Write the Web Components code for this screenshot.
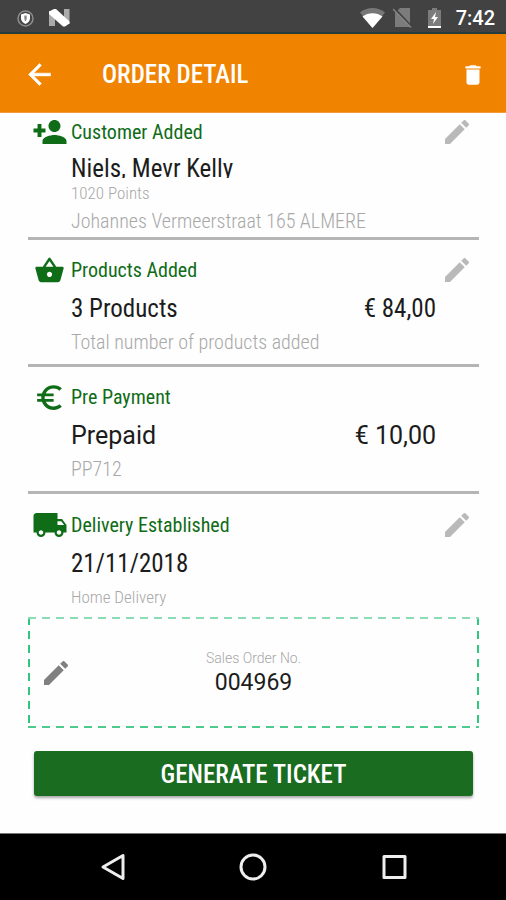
<!DOCTYPE html>
<html lang="en">
<head>
<meta charset="utf-8">
<meta name="viewport" content="width=device-width, initial-scale=1">
<title>Order Detail</title>
<style>
  html, body { margin: 0; padding: 0; }
  body {
    min-height: 100vh;
    display: flex;
    flex-direction: column;
    background: #fefefe;
    color: #1c1c1c;
    font-family: "Roboto Condensed", Roboto, "Liberation Sans", sans-serif;
  }
  main { flex: 1; display: flex; flex-direction: column; padding: 0 27px 0 28px; }
</style>
</head>
<body>
<status-bar>7:42</status-bar>
<app-bar>ORDER DETAIL</app-bar>
<main>
  <order-section icon="person" edit="Edit customer" compact>
    <span slot="heading">Customer Added</span>
    <span slot="value">Niels, Mevr Kelly</span>
    <span slot="detail">1020 Points</span>
    <span slot="note">Johannes Vermeerstraat 165 ALMERE</span>
  </order-section>
  <order-section icon="basket" edit="Edit products">
    <span slot="heading">Products Added</span>
    <span slot="value">3 Products</span>
    <span slot="amount">€ 84,00</span>
    <span slot="note">Total number of products added</span>
  </order-section>
  <order-section icon="euro" wide>
    <span slot="heading">Pre Payment</span>
    <span slot="value">Prepaid</span>
    <span slot="amount">€ 10,00</span>
    <span slot="note">PP712</span>
  </order-section>
  <order-section icon="truck" edit="Edit delivery" last>
    <span slot="heading">Delivery Established</span>
    <span slot="value">21/11/2018</span>
    <span slot="note">Home Delivery</span>
  </order-section>
  <sales-order>
    <span slot="label">Sales Order No.</span>
    <span slot="number">004969</span>
  </sales-order>
  <primary-button>GENERATE TICKET</primary-button>
</main>
<nav-bar></nav-bar>

<script>
const ICONS = {
  person: [36, '<path d="M15 12c2.21 0 4-1.79 4-4s-1.79-4-4-4-4 1.79-4 4 1.79 4 4 4zm-8.700-2.300V6.700H3.700V9.700H1v2.600h2.700v3h2.600v-3H9V9.700H6.300zM15 14c-2.67 0-8 1.34-8 4v2h16v-2c0-2.66-5.33-4-8-4z"/>'],
  basket: [31, '<path d="M17.21 9l-4.38-6.56c-.19-.28-.51-.42-.83-.42-.32 0-.64.14-.83.43L6.79 9H2c-.55 0-1 .45-1 1 0 .09.01.18.04.27l2.54 9.27c.23.84 1 1.46 1.92 1.46h13c.92 0 1.69-.62 1.93-1.46l2.54-9.27L23 10c0-.55-.45-1-1-1h-4.79zM9 9l3-4.4L15 9H9zm3 8c-1.1 0-2-.9-2-2s.9-2 2-2 2 .9 2 2-.9 2-2 2z"/>'],
  euro: [33, '<path d="M15 18.5c-2.51 0-4.68-1.42-5.76-3.5H15v-2H8.58c-.05-.33-.08-.66-.08-1s.03-.67.08-1H15V9H9.24C10.32 6.92 12.5 5.5 15 5.5c1.61 0 3.09.59 4.23 1.57L21 5.3C19.41 3.87 17.3 3 15 3c-3.92 0-7.24 2.51-8.48 6H3v2h3.06c-.04.33-.06.66-.06 1s.02.67.06 1H3v2h3.52c1.24 3.49 4.56 6 8.48 6 2.31 0 4.41-.87 6-2.3l-1.78-1.77c-1.13.98-2.6 1.57-4.22 1.57z"/>'],
  truck: [36, '<path d="M20 8h-3V4H3c-1.1 0-2 .9-2 2v11h2c0 1.66 1.34 3 3 3s3-1.34 3-3h6c0 1.66 1.34 3 3 3s3-1.34 3-3h2v-5l-3-4zM6 18.5c-.83 0-1.5-.67-1.5-1.5s.67-1.5 1.5-1.5 1.5.67 1.5 1.5-.67 1.5-1.5 1.5zm13.5-9l1.96 2.5H17V9.5h2.5zm-1.5 9c-.83 0-1.5-.67-1.5-1.5s.67-1.5 1.5-1.5 1.5.67 1.5 1.5-.67 1.5-1.5 1.5z"/>'],
  pencil: [32, '<path d="M3 17.25V21h3.75L17.81 9.94l-3.75-3.75L3 17.25zM20.71 7.04c.39-.39.39-1.02 0-1.41l-2.34-2.34c-.39-.39-1.02-.39-1.41 0l-1.83 1.83 3.75 3.75 1.83-1.83z"/>'],
  back: [33, '<path d="M20 11H7.83l5.59-5.59L12 4l-8 8 8 8 1.41-1.41L7.83 13H20v-2z" stroke="currentColor" stroke-width=".4"/>'],
  trash: [26, '<path d="M6 19c0 1.1.9 2 2 2h8c1.1 0 2-.9 2-2V7H6v12zM19 4h-3.5l-1-1h-5l-1 1H5v2h14V4z"/>']
};
const icon = name => {
  const [size, body] = ICONS[name];
  return `<svg width="${size}" height="${size}" viewBox="0 0 24 24" fill="currentColor" aria-hidden="true">${body}</svg>`;
};
const BASE = `
  :host, *, *::before, *::after { box-sizing: border-box; }
  svg { display: block; flex: none; }
  button { font: inherit; color: inherit; background: none; border: 0; margin: 0; padding: 0; cursor: pointer; display: flex; align-items: center; justify-content: center; }
`;
const define = (name, render) => customElements.define(name, class extends HTMLElement {
  constructor() { super(); this.attachShadow({ mode: "open" }); }
  connectedCallback() { this.shadowRoot.innerHTML = `<style>${BASE}</style>` + render(this); }
});

define("status-bar", () => `
  <style>
    :host { display: flex; align-items: center; height: 34px; padding: 2px 11px 0 16px; background: #424242; box-shadow: inset 0 -2px #253c3c; color: #fff; font: 500 20px/24px Roboto, sans-serif; }
    .left { display: flex; gap: 14px; flex: 1; align-items: center; }
    .right { display: flex; align-items: center; }
    .wifi { margin-right: 8px; } .sim { margin-right: 16px; } .battery { margin-right: 15px; }
  </style>
  <div class="left">
    <svg width="19" height="19" viewBox="0 0 19 19"><circle cx="9.500" cy="9.500" r="7.500" fill="#444" stroke="#8c8c8c" stroke-width="1.500"/><path d="M5 5.500l4.500-1.500 4.500 1.500v4c0 2.500-2 4.300-4.500 5.500C7 13.800 5 12 5 9.500z" fill="#fff"/><path d="M8.300 6.500h2.400v3l-.7 2.500H9l-.7-2.500z" fill="#888"/></svg>
    <svg width="21" height="18" viewBox="0 0 21 18"><path d="M0 2h6v15H0zM15 0h5.500v15H15z" fill="#aaa"/><path d="M0 2.500L5 0h2l13.500 12.500v2L16 17.500h-2L0 5z" fill="#fff"/></svg>
  </div>
  <div class="right">
    <svg class="wifi" width="25" height="20" viewBox="0 0 25 20"><path d="M0 4.500C7-1.500 18-1.500 25 4.500L12.500 20z" fill="#777"/><path d="M2.500 8.500C8 4 17 4 22.500 8.500L12.500 20z" fill="#fff"/></svg>
    <svg class="sim" width="19" height="20" viewBox="0 0 19 20"><path d="M7 0h10v19H2V5z" fill="#7c7c7c"/><path d="M2 1l18 19" stroke="#424242" stroke-width="2"/><path d="M0 1l18 18.500" stroke="#858585" stroke-width="1.500"/></svg>
    <svg class="battery" width="13" height="20" viewBox="0 0 13 20"><path d="M4 0h5v2h4v18H0V2h4z" fill="#7c7c7c"/><path d="M0 18h13v2H0z" fill="#fff"/><path d="M8 4l-5 7h3l-1 5 5-7H7z" fill="#fff"/></svg>
    <span><slot></slot></span>
  </div>`);

define("app-bar", () => `
  <style>
    :host { display: flex; align-items: center; height: 79px; padding: 3px 20px 0 23px; background: #f08300; color: #fff; border-bottom: 1px solid #f39a3c; }
    h1 { flex: 1; margin: 0 0 0 46px; font-size: 25px; line-height: 30px; font-weight: 500; }
  </style>
  <button aria-label="Back">${icon("back")}</button>
  <h1><slot></slot></h1>
  <button aria-label="Delete order">${icon("trash")}</button>`);

define("order-section", el => `
  <style>
    :host { display: block; padding: 15px 0 13px; border-bottom: 3px solid #b5b5b5; }
    :host([last]) { border-bottom: 0; padding: 16px 0 11px; }
    :host([compact]) { padding: 4px 0 7px; }
    .head { display: flex; align-items: center; height: 30px; padding-right: 6px; }
    .icon { width: 43px; display: flex; justify-content: center; align-items: center; color: #0f6c17; }
    h2 { flex: 1; margin: 0; font-size: 20px; line-height: 24px; font-weight: 400; color: #0f6c17; }
    button { color: #b9b9b9; }
    .body { padding: 0 43px; }
    .row { display: flex; align-items: center; justify-content: space-between; height: 48px; font-size: 25px; line-height: 30px; }
    :host([wide]) .row { font-family: Roboto, sans-serif; }
    .detail { display: none; font-size: 17px; font-weight: 300; line-height: 18px; color: #a8a8a8; }
    .note { font-size: 20px; font-weight: 300; line-height: 18px; color: #a8a8a8; }
    :host([last]) .note { font-size: 17px; }
    :host([compact]) .row { height: 24px; margin: 7px 0 6px; align-items: flex-start; overflow: hidden; }
    :host([compact]) .detail { display: block; margin-bottom: 10px; }
  </style>
  <section>
    <div class="head">
      <span class="icon">${icon(el.getAttribute("icon"))}</span>
      <h2><slot name="heading"></slot></h2>
      ${el.hasAttribute("edit") ? `<button aria-label="${el.getAttribute("edit")}">${icon("pencil")}</button>` : ""}
    </div>
    <div class="body">
      <div class="row"><slot name="value"></slot><slot name="amount"></slot></div>
      <div class="detail"><slot name="detail"></slot></div>
      <div class="note"><slot name="note"></slot></div>
    </div>
  </section>`);

define("sales-order", () => `
  <style>
    :host {
      --top: repeating-linear-gradient(90deg, #8bdcb2 0 8px, transparent 8px 14px);
      --bottom: repeating-linear-gradient(90deg, #4ccb8c 0 8px, transparent 8px 14px);
      --side: repeating-linear-gradient(180deg, #2fc67e 0 8px, transparent 8px 14px);
      display: grid; grid-template-columns: 56px 1fr 56px; align-items: center; height: 111px;
      background: var(--top) top / 100% 2px no-repeat, var(--bottom) bottom / 100% 2px no-repeat,
        var(--side) left / 2px 100% no-repeat, var(--side) right / 2px 100% no-repeat;
      font-family: Roboto, sans-serif;
    }
    button { color: #808080; }
    .text { text-align: center; }
    .label { font-size: 14px; font-weight: 300; line-height: 20px; color: #a8a8a8; }
    .number { font-size: 23px; line-height: 30px; }
  </style>
  <button aria-label="Edit sales order number">${icon("pencil")}</button>
  <div class="text">
    <div class="label"><slot name="label"></slot></div>
    <div class="number"><slot name="number"></slot></div>
  </div>`);

define("primary-button", () => `
  <style>
    :host { display: block; padding: 23px 6px 32px; }
    button { width: 100%; height: 45px; padding-top: 3px; border-radius: 3px; background: #1a6c21; color: #fff; font-size: 25px; font-weight: 500; line-height: 30px; box-shadow: 0 2px 3px rgba(0,0,0,.35); }
  </style>
  <button><slot></slot></button>`);

define("nav-bar", () => `
  <style>
    :host { display: block; background: #000; color: #eee; border-top: 1px solid #777; }
    nav { display: grid; grid-template-columns: repeat(3, 1fr); height: 66px; padding: 0 42px; }
    svg { fill: none; stroke: currentColor; stroke-width: 3; stroke-linejoin: round; }
  </style>
  <nav>
    <button aria-label="Back"><svg width="28" height="28" viewBox="0 0 28 28"><path d="M5 14L25 2.500v23z"/></svg></button>
    <button aria-label="Home"><svg width="28" height="28" viewBox="0 0 28 28"><circle cx="14" cy="14" r="12"/></svg></button>
    <button aria-label="Recent apps"><svg width="28" height="28" viewBox="0 0 28 28"><path d="M4 3.500h21v21H4z"/></svg></button>
  </nav>`);
</script>
</body>
</html>
